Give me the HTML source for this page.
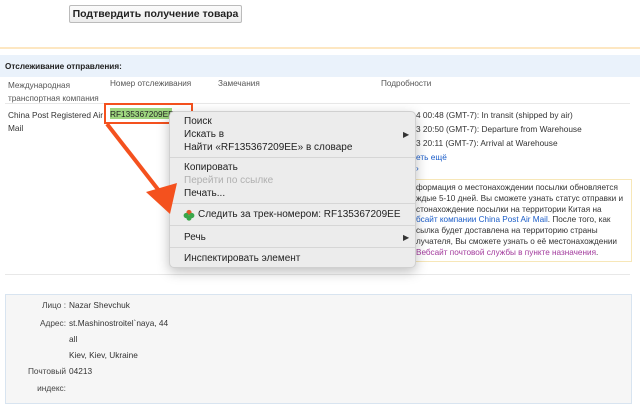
<!DOCTYPE html>
<html><head><meta charset="utf-8"><style>
*{margin:0;padding:0;box-sizing:border-box}
body{width:640px;height:400px;overflow:hidden;background:#fff;font-family:"Liberation Sans",Arial,sans-serif;position:relative;color:#333}
.a{position:absolute;white-space:nowrap}
.s{font-size:8.2px;color:#555}
.t{font-size:8.3px;color:#333}
.m{font-size:10px;color:#222}
.blue{color:#1a5cc8}
</style></head><body>
<div class="a" style="left:69px;top:5px;width:173px;height:18px;border:1px solid #bbb;border-radius:2px;background:linear-gradient(#fbfbfb,#ececec);font-size:10.5px;font-weight:bold;color:#222;text-align:center;line-height:16px">Подтвердить получение товара</div>
<div class="a" style="left:0;top:47px;width:640px;height:2px;background:#fde7c2"></div>
<div class="a" style="left:0;top:55px;width:640px;height:22px;background:#eaf2fb"></div>
<div class="a" style="left:5px;top:62px;font-size:8.2px;font-weight:bold;color:#222">Отслеживание отправления:</div>
<div class="a s" style="left:8px;top:79px;line-height:13px">Международная<br>транспортная компания</div>
<div class="a s" style="left:110px;top:79px">Номер отслеживания</div>
<div class="a s" style="left:218px;top:79px">Замечания</div>
<div class="a s" style="left:381px;top:79px">Подробности</div>
<div class="a" style="left:5px;top:103px;width:625px;height:1px;background:#e8e8e8"></div>
<div class="a t" style="left:8px;top:109px;line-height:13px">China Post Registered Air<br>Mail</div>
<div class="a" style="left:110px;top:108px;width:62px;height:11px;background:#9ed67f"></div>
<div class="a t" style="left:110px;top:109px;color:#222">RF135367209EE</div>
<div class="a" style="left:104px;top:103px;width:89px;height:21px;border:2px solid #f4511e"></div>
<div class="a t" style="left:416px;top:110px">4 00:48 (GMT-7): In transit (shipped by air)</div>
<div class="a t" style="left:416px;top:124px">3 20:50 (GMT-7): Departure from Warehouse</div>
<div class="a t" style="left:416px;top:138px">3 20:11 (GMT-7): Arrival at Warehouse</div>
<div class="a t blue" style="left:416px;top:152px">еть ещё</div>
<div class="a t blue" style="left:416px;top:163px">›</div>
<div class="a" style="left:390px;top:179px;width:242px;height:83px;border:1px solid #f7e7b8"></div>
<div class="a t" style="left:416px;top:183px;line-height:10.8px;font-size:8.2px">формация о местонахождении посылки обновляется<br>ждые 5-10 дней. Вы сможете узнать статус отправки и<br>стонахождение посылки на территории Китая на<br><span class="blue">бсайт компании China Post Air Mail</span>. После того, как<br>сылка будет доставлена на территорию страны<br>лучателя, Вы сможете узнать о её местонахождении<br><span style="color:#a23a9c">Вебсайт почтовой службы в пункте назначения</span>.</div>
<div class="a" style="left:5px;top:274px;width:625px;height:1px;background:#e8e8e8"></div>
<div class="a" style="left:5px;top:294px;width:627px;height:110px;background:#f6f6f6;border:1px solid #d8e4f0"></div>
<div class="a t" style="left:0;top:300px;width:66px;text-align:right;color:#444">Лицо :</div>
<div class="a t" style="left:69px;top:300px">Nazar Shevchuk</div>
<div class="a t" style="left:0;top:318px;width:66px;text-align:right;color:#444">Адрес:</div>
<div class="a t" style="left:69px;top:318px">st.Mashinostroitel`naya, 44</div>
<div class="a t" style="left:69px;top:334px">all</div>
<div class="a t" style="left:69px;top:350px">Kiev, Kiev, Ukraine</div>
<div class="a t" style="left:0;top:366px;width:66px;text-align:right;color:#444">Почтовый</div>
<div class="a t" style="left:69px;top:366px">04213</div>
<div class="a t" style="left:0;top:383px;width:66px;text-align:right;color:#444">индекс:</div>
<div class="a" style="left:169px;top:111px;width:247px;height:157px;background:#ececec;border:1px solid #d0d0d0;border-radius:5px;box-shadow:0 4px 12px rgba(0,0,0,.25)">
<div class="a m" style="left:14px;top:4px">Поиск</div>
<div class="a m" style="left:14px;top:17px">Искать в</div>
<div class="a" style="left:233px;top:18px;font-size:8px;color:#333">▶</div>
<div class="a m" style="left:14px;top:30px">Найти «RF135367209EE» в словаре</div>
<div class="a" style="left:0;top:45px;width:245px;height:1px;background:#d6d6d6"></div>
<div class="a m" style="left:14px;top:50px">Копировать</div>
<div class="a m" style="left:14px;top:63px;color:#b0b0b0">Перейти по ссылке</div>
<div class="a m" style="left:14px;top:76px">Печать...</div>
<div class="a" style="left:0;top:91px;width:245px;height:1px;background:#d6d6d6"></div>
<svg class="a" style="left:13px;top:97px" width="12" height="12" viewBox="0 0 12 12"><circle cx="6" cy="3.5" r="2.6" fill="#e05a2a"/><circle cx="3.2" cy="6.5" r="2.6" fill="#3aa64a"/><circle cx="8.8" cy="6.5" r="2.6" fill="#3aa64a"/><circle cx="6" cy="9" r="2.6" fill="#3aa64a"/></svg>
<div class="a m" style="left:28px;top:97px">Следить за трек-номером: RF135367209EE</div>
<div class="a" style="left:0;top:113px;width:245px;height:1px;background:#d6d6d6"></div>
<div class="a m" style="left:14px;top:120px">Речь</div>
<div class="a" style="left:233px;top:121px;font-size:8px;color:#333">▶</div>
<div class="a" style="left:0;top:135px;width:245px;height:1px;background:#d6d6d6"></div>
<div class="a m" style="left:14px;top:141px">Инспектировать элемент</div>
</div>
<svg class="a" style="left:0;top:0" width="640" height="400"><line x1="107" y1="124" x2="160" y2="192" stroke="#f4511e" stroke-width="4"/><polygon points="146,192 177,183 170,214" fill="#f4511e"/></svg>
</body></html>
